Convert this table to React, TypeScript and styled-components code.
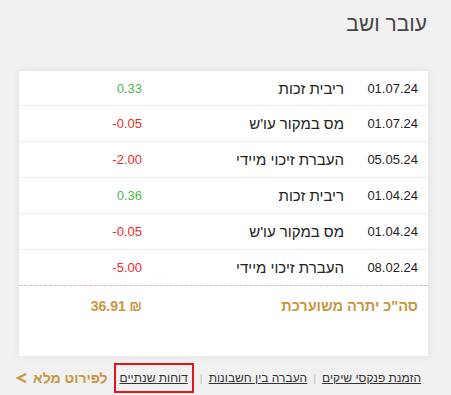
import React from "react";
import styled, { createGlobalStyle } from "styled-components";

const Global = createGlobalStyle`
  html, body { margin: 0; padding: 0; background: #f1f1f1; }
  body { font-family: "Liberation Sans", "DejaVu Sans", Arial, sans-serif; }
`;

const Page = styled.div`
  direction: rtl;
  width: 451px;
  height: 395px;
  box-sizing: border-box;
  padding: 11px 23px 0 19px;
  display: flex;
  flex-direction: column;
`;

const Title = styled.h1`
  margin: 0;
  font-size: 21px;
  font-weight: normal;
  color: #444;
  line-height: 26px;
  padding-right: 1px;
`;

const Card = styled.div`
  margin-top: 34px;
  background: #fff;
  box-shadow: 0 0 8px rgba(0, 0, 0, 0.08);
  height: 285px;
  display: flex;
  flex-direction: column;
`;

const Row = styled.div`
  display: grid;
  grid-template-columns: 74px 202px 1fr;
  align-items: center;
  height: 36px;
  padding-right: 10px;
  border-bottom: 1px solid #eeeeee;
  box-sizing: border-box;
  &:first-child { height: 35px; }
`;

const DateCell = styled.div`
  font-size: 13px;
  color: #222;
`;

const Desc = styled.div`
  font-size: 15px;
  color: #222;
`;

const Amount = styled.div<{ $pos: boolean }>`
  font-size: 13px;
  color: ${(p) => (p.$pos ? "#4cb84c" : "#ee2a2a")};
  direction: ltr;
  text-align: right;
`;

const TotalRow = styled.div`
  display: grid;
  grid-template-columns: 276px 1fr;
  align-items: center;
  padding: 12px 10px 0 0;
  border-top: 1px dashed #d9b8c2;
  margin-top: -1px;
  color: #c8953f;
  font-weight: bold;
`;

const TotalLabel = styled.div`
  font-size: 14.5px;
`;

const TotalValue = styled.div`
  font-size: 14px;
`;

const Footer = styled.div`
  display: flex;
  align-items: center;
  margin-top: 7px;
  padding-right: 7px;
  height: 30px;
  font-size: 12px;
  white-space: nowrap;
`;

const Link = styled.a<{ $boxed?: boolean }>`
  color: #333;
  text-decoration: underline;
  padding: ${(p) => (p.$boxed ? "5px 4px" : "0")};
  border: ${(p) => (p.$boxed ? "2px solid #e3141d" : "none")};
  line-height: 16px;
  white-space: nowrap;
`;

const Sep = styled.span`
  color: #bbb;
  font-size: 11px;
  margin: 0 6px;
`;

const More = styled.a`
  color: #c8953f;
  font-weight: bold;
  font-size: 14px;
  margin-right: 6px;
  display: flex;
  align-items: center;
  gap: 5px;
  white-space: nowrap;
`;

const rows = [
  { d: "01.07.24", t: "ריבית זכות", a: "0.33" },
  { d: "01.07.24", t: "מס במקור עו'ש", a: "-0.05" },
  { d: "05.05.24", t: "העברת זיכוי מיידי", a: "-2.00" },
  { d: "01.04.24", t: "ריבית זכות", a: "0.36" },
  { d: "01.04.24", t: "מס במקור עו'ש", a: "-0.05" },
  { d: "08.02.24", t: "העברת זיכוי מיידי", a: "-5.00" },
];

export default function App() {
  return (
    <Page>
      <Global />
      <Title>עובר ושב</Title>
      <Card>
        {rows.map((r, i) => (
          <Row key={i}>
            <DateCell>{r.d}</DateCell>
            <Desc>{r.t}</Desc>
            <Amount $pos={!r.a.startsWith("-")}>{r.a}</Amount>
          </Row>
        ))}
        <TotalRow>
          <TotalLabel>סה"כ יתרה משוערכת</TotalLabel>
          <TotalValue>₪ 36.91</TotalValue>
        </TotalRow>
      </Card>
      <Footer>
        <Link>הזמנת פנקסי שיקים</Link>
        <Sep>|</Sep>
        <Link>העברה בין חשבונות</Link>
        <Sep>|</Sep>
        <Link $boxed>דוחות שנתיים</Link>
        <More>
          לפירוט מלא
          <svg width="12" height="12" viewBox="0 0 12 12">
            <path d="M10 2 L2 6 L10 10" fill="none" stroke="#c8953f" strokeWidth="2.2" />
          </svg>
        </More>
      </Footer>
    </Page>
  );
}
